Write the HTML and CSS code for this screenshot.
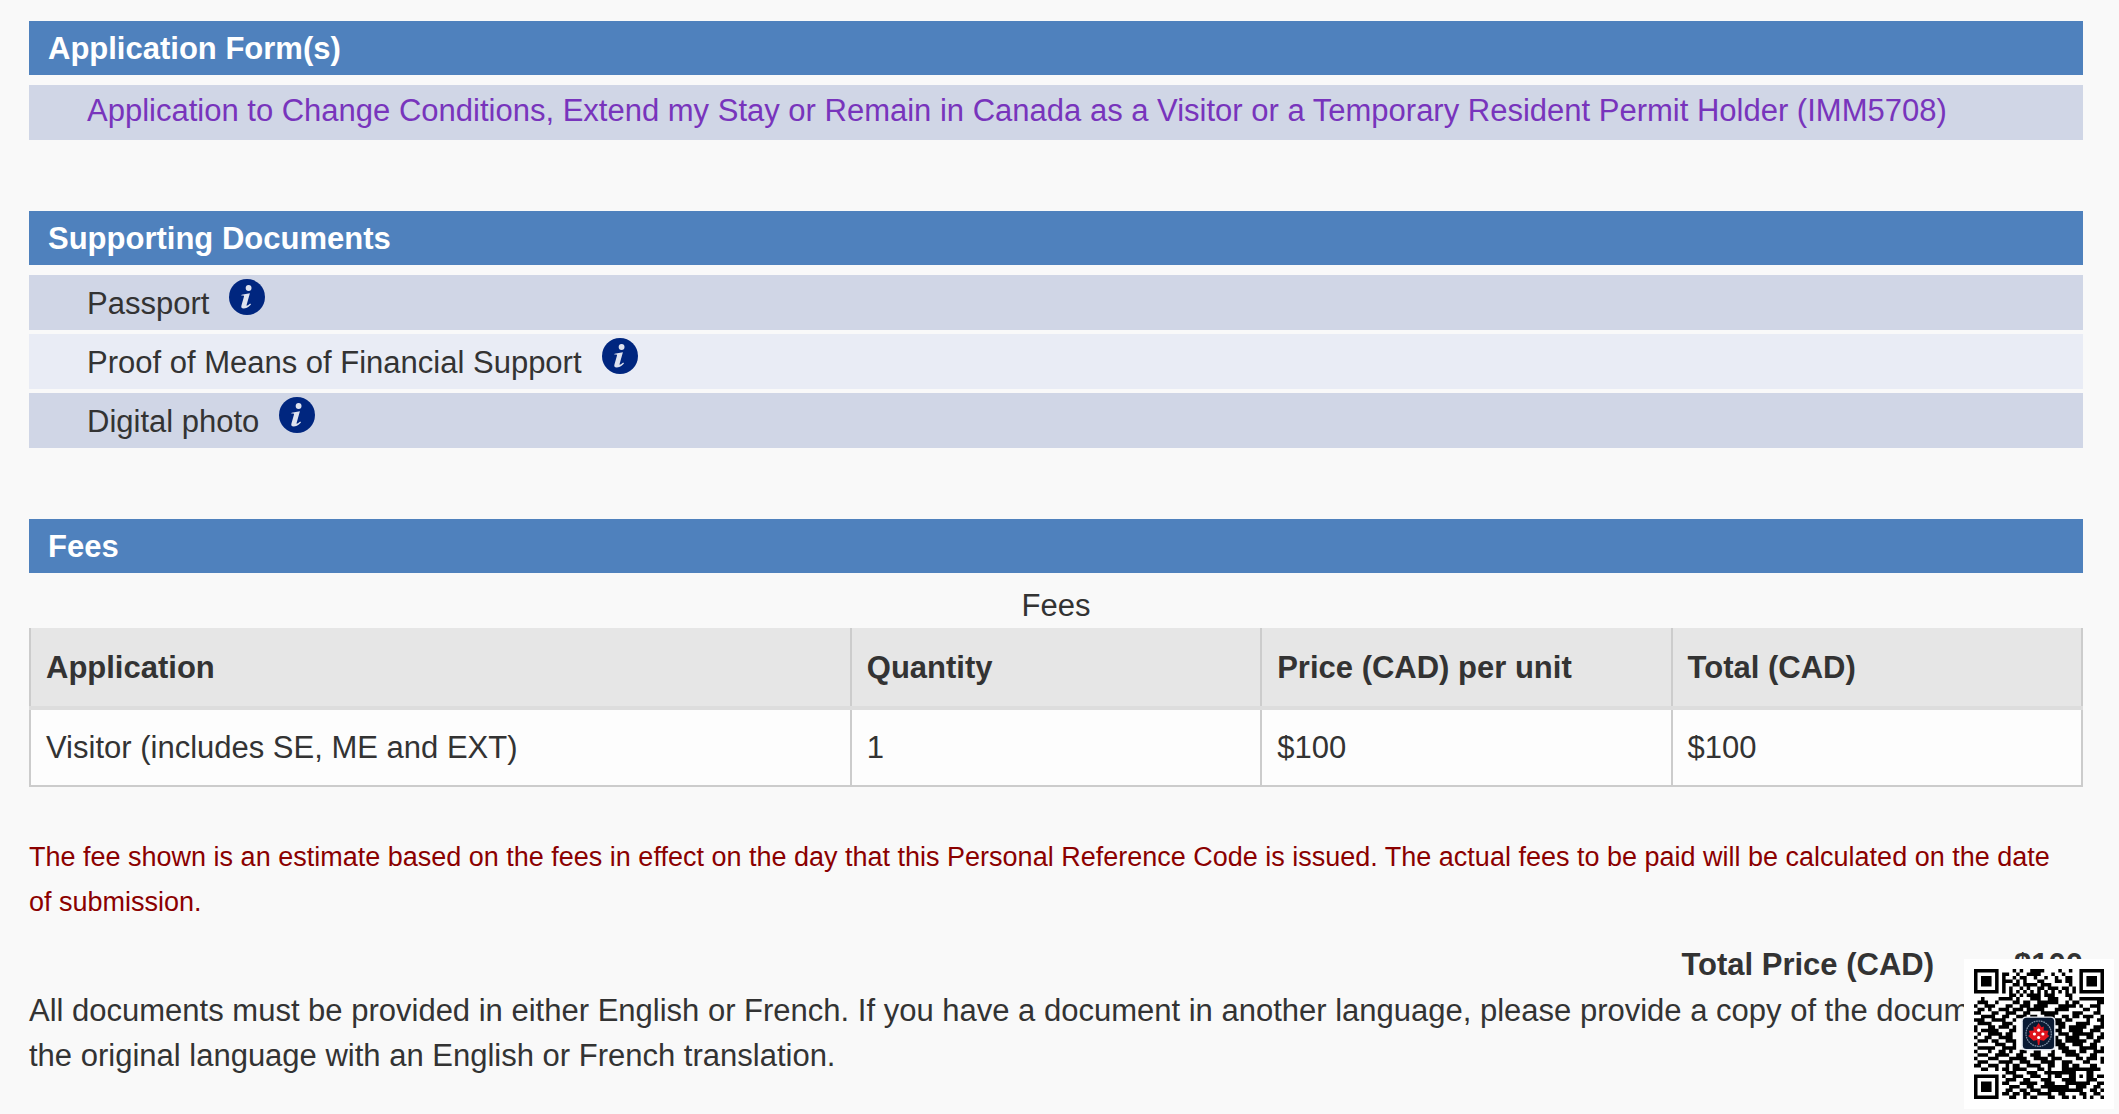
FILE: index.html
```
<!doctype html>
<html lang="en">
<head>
    <meta charset="utf-8">
    <title>Document Checklist</title>
    <link rel="stylesheet" href="styles.css">
</head>
<body>
    <svg class="defs" aria-hidden="true">
        <symbol id="info" viewBox="0 0 36 36">
            <circle cx="18" cy="18" r="18" fill="#00267f"/>
            <circle cx="19.6" cy="9" r="2.9" fill="#dfe3ef"/>
            <path d="M12.6 15.7l8.3-1.5-3.3 11.8c-.3 1.2.5 1.2 3.6-1.4l.8.9c-3 3-5.3 4-7.3 4-2.2 0-2.8-1.3-2.2-3.3l2.5-8.7c.2-.8-.6-1.1-2.6-.8z" fill="#dfe3ef"/>
        </symbol>
    </svg>
    <main class="content">
        <section class="box">
            <h2>Application Form(s)</h2>
            <ul class="list forms">
                <li><a href="#imm5708">Application to Change Conditions, Extend my Stay or Remain in Canada as a Visitor or a Temporary Resident Permit Holder (IMM5708)</a></li>
            </ul>
        </section>
        <section class="box">
            <h2>Supporting Documents</h2>
            <ul class="list docs">
                <li><span>Passport</span><button type="button" class="info" aria-label="About Passport"><svg><use href="#info"/></svg></button></li>
                <li><span>Proof of Means of Financial Support</span><button type="button" class="info" aria-label="About Proof of Means of Financial Support"><svg><use href="#info"/></svg></button></li>
                <li><span>Digital photo</span><button type="button" class="info" aria-label="About Digital photo"><svg><use href="#info"/></svg></button></li>
            </ul>
        </section>
        <section>
            <h2>Fees</h2>
            <table class="fees">
                <caption>Fees</caption>
                <thead>
                    <tr>
                        <th class="wide">Application</th>
                        <th>Quantity</th>
                        <th>Price (CAD) per unit</th>
                        <th>Total (CAD)</th>
                    </tr>
                </thead>
                <tbody>
                    <tr>
                        <td>Visitor (includes SE, ME and EXT)</td>
                        <td>1</td>
                        <td>$100</td>
                        <td>$100</td>
                    </tr>
                </tbody>
            </table>
            <p class="note">The fee shown is an estimate based on the fees in effect on the day that this Personal Reference Code is issued. The actual fees to be paid will be calculated on the date of submission.</p>
            <div class="total"><span>Total Price (CAD)</span><span>$100</span></div>
            <p>All documents must be provided in either English or French. If you have a document in another language, please provide a copy of the document in the original language with an English or French translation.</p>
        </section>
    </main>
    <div class="qr">
        <svg viewBox="0 0 37 37" role="img" aria-label="QR code">
            <path id="modules" fill="#000"/>
            <rect x="13.5" y="13.5" width="9.7" height="9.7" rx="1.3" fill="#e4e8f0"/>
            <rect x="13.9" y="13.9" width="8.9" height="8.9" rx="1" fill="#0a1a33"/>
            <circle cx="18.4" cy="18.4" r="3.6" fill="none" stroke="#8090a5" stroke-width=".35" stroke-dasharray=".5 .2"/>
            <path d="M18.400 15.400l.8 1.200.7-.2-.1 1.100 1.400.1-.3 1 .5.500-1.500 1.300-1.100-.2-.2 1.400h-.4l-.2-1.400-1.100.2-1.500-1.300.5-.5-.3-1 1.400-.1-.1-1.100.7.200z" fill="#e0131c"/>
            <g fill="#fff">
                <circle cx="18.4" cy="17.4" r=".45"/>
                <circle cx="17.2" cy="18.5" r=".45"/>
                <circle cx="19.6" cy="18.5" r=".45"/>
                <circle cx="18.4" cy="19.5" r=".45"/>
            </g>
        </svg>
    </div>
    <script src="qr.js"></script>
</body>
</html>
```
FILE: styles.css
```
body,
h2,
ul,
p {
    margin: 0px;
    padding: 0px;
}
body {
    background: #f9f9f9;
    color: #333;
    font-family: "Liberation Sans", Arial, sans-serif;
    font-size: 31px;
    line-height: 45px;
}
.defs {
    display: none;
}
.content {
    padding: 21px 36px 0px 29px;
}
.box {
    margin-bottom: 71px;
}
h2 {
    padding: 5px 19px 4px;
    background: #4f81bd;
    color: #fff;
    font-size: 31px;
    line-height: 45px;
}
.list {
    display: flex;
    flex-direction: column;
    gap: 4px;
    margin-top: 10px;
    list-style: none;
}
.list li {
    background: #d0d6e6;
}
.list li:nth-child(even) {
    background: #e9ecf5;
}
.forms li {
    padding: 3px 58px 7px;
}
.forms a {
    color: #7834bc;
    text-decoration: none;
}
.docs li {
    display: flex;
    align-items: flex-start;
    gap: 20px;
    padding: 4px 58px 1px;
    line-height: 50px;
}
.info {
    width: 36px;
    height: 36px;
    padding: 0px;
    border: 0px;
    background: none;
    cursor: pointer;
}
.info svg {
    display: block;
    width: 36px;
    height: 36px;
}
.fees {
    width: 100%;
    margin-bottom: 48px;
    border-collapse: collapse;
    table-layout: fixed;
}
.fees caption {
    padding-top: 10px;
}
.fees th,
.fees td {
    box-sizing: border-box;
    padding: 15px;
    border: 2px solid #ccc;
    text-align: left;
}
.fees th {
    padding-top: 17px;
    padding-bottom: 16px;
    border-top: 0px;
    border-bottom: 4px solid #ddd;
    background: #e6e6e6;
}
.fees td {
    background: #fdfdfd;
}
.fees .wide {
    width: 40%;
}
.note {
    margin-bottom: 17px;
    padding-right: 20px;
    color: #8b0000;
    font-size: 27px;
}
.total {
    display: flex;
    justify-content: flex-end;
    gap: 80px;
    padding-bottom: 1px;
    font-weight: bold;
}
/* floats over the bottom right corner of the page */
.qr {
    position: fixed;
    right: 5px;
    bottom: 5px;
    padding: 10px;
    background: #fff;
}
.qr svg {
    display: block;
    width: 130px;
    height: 130px;
}
```
FILE: qr.js
```
var rows = [
    '1111111000010100111100001001001111111',
    '1000001011001001111000100100001000001',
    '1011101010010110010010010011001011101',
    '1011101011101010001100011011001011101',
    '1011101010011011110111000001001011101',
    '1000001010100101001101110110101000001',
    '1111111010101010101010101010101111111',
    '0000000000110101111011100011000000000',
    '0010000111101000111001110001001111111',
    '0111001000011011001111110010110000011',
    '1001110001100111011110001111101001110',
    '0110100111011101111100011110000110010',
    '1100011001110011000111110000111000110',
    '0011110011001110110011100110110111001',
    '1110011110010000000000011011000010011',
    '0111100011100000000000011100011110001',
    '1000110111010000000000001101111100111',
    '1011111000110000000000011001111001110',
    '0100111101100000000000001110111111001',
    '1001100111100000000000010011110011011',
    '0111011001110000000000011011111100110',
    '1000001110010000000000011100111001100',
    '0111110011110000000000001110001111101',
    '1000100110100110011000100111101100111',
    '0111001111001100111001100011110001100',
    '1000111000111110011110111000011011101',
    '0111000111100111000111100111000110001',
    '1100111001011001111001100110110001100',
    '0011001011011110001101000111111111110',
    '0000000001110001110011111111100011000',
    '1111111010011100111001011001101011011',
    '1000001001110011000111000111100011100',
    '1011101011000111110011100011111110011',
    '1011101000111001100111111110011100110',
    '1011101001100110111001111111111001101',
    '1000001011011011001111001100001100110',
    '1111111000110010110001100110100101001'
];
var d = '';
for (var y = 0; y < rows.length; y++) {
    for (var x = 0; x < rows[y].length; x++) {
        if (rows[y].charAt(x) == '1') {
            d += 'M' + x + ' ' + y + 'h1v1h-1z';
        }
    }
}
document.getElementById('modules').setAttribute('d', d);
```
